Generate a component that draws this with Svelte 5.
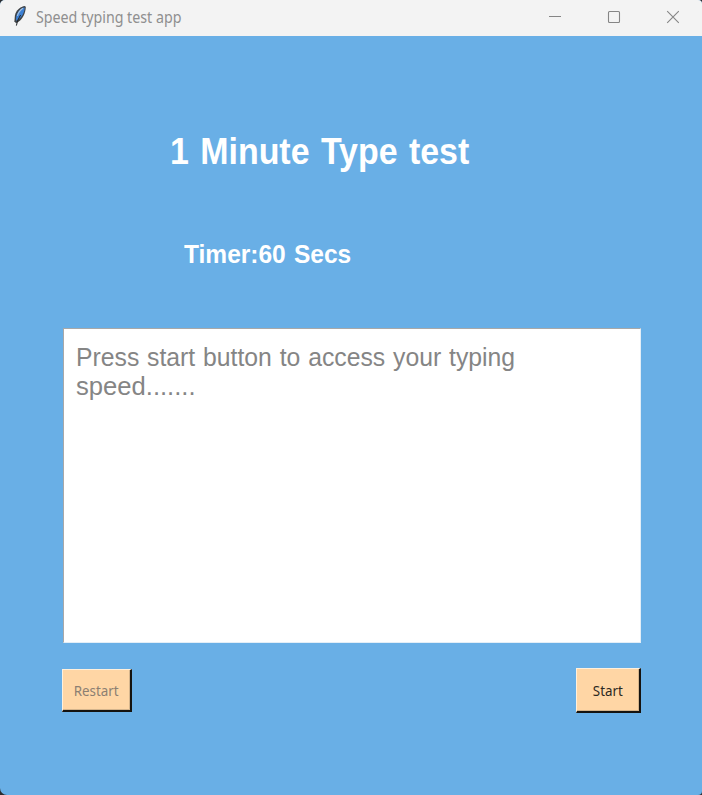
<script>
  const seconds = 60;
</script>

<div class="backdrop">
  <main class="window">
    <header>
      <svg class="feather" width="16" height="22" viewBox="0 0 16 22">
        <path d="M13 1C8.4 1.5 4 5 2.9 10.5L2.4 16.2l1.6 2 2.6-1.4C11 13.4 13.4 8.6 13.8 2Z" fill="#3f4347" />
        <path d="M12.3 2.2C8 4 4.9 7.6 4.2 11.6L4 15.7C8.8 13.8 11.8 9.4 12.7 3.6Z" fill="#3c80d4" />
        <path d="M11 3.2C8.2 5 6.2 7.6 5.4 10.8" stroke="#a3c1e2" stroke-width="1.2" fill="none" />
        <path d="M8.6 10C7 12.8 5.4 15.4 4.4 20.6" stroke="#202326" stroke-width="1" fill="none" />
      </svg>
      <span class="caption">Speed typing test app</span>
      <div class="controls">
        <svg width="14" height="14" viewBox="0 0 14 14"><path d="M1 6.5h12" /></svg>
        <svg width="14" height="14" viewBox="0 0 14 14"><rect x="1.5" y="1.5" width="11" height="11" rx="1" /></svg>
        <svg width="14" height="14" viewBox="0 0 14 14"><path d="M1.2 1.2l11.6 11.6M12.8 1.2L1.2 12.8" /></svg>
      </div>
    </header>
    <h1>1 Minute Type test</h1>
    <p class="timer">Timer:{seconds} Secs</p>
    <div class="entry">
      <span class="line">Press start button to access your typing</span>
      <span class="line dotted">speed.......</span>
    </div>
    <footer>
      <button class="restart" disabled><span>Restart</span></button>
      <button class="start"><span>Start</span></button>
    </footer>
  </main>
</div>

<style>
  :global(body) { margin: 0; }
  .backdrop { width: 702px; height: 795px; background: #2b2d30; }
  .window {
    display: flex; flex-direction: column; width: 702px; height: 795px; box-sizing: border-box;
    background: #69afe6; border-radius: 5px 4px 4px 7px; overflow: hidden;
    font-family: "Liberation Sans", Arial, sans-serif;
  }
  header { display: flex; align-items: center; height: 36px; background: #f3f3f3; flex: none; }
  .feather { margin: -4px 0 0 12px; }
  .caption { margin: -3px 0 0 8px; font: 15.5px/20px "Noto Sans", "Open Sans", sans-serif; color: #8f8f8f; white-space: nowrap; transform: scaleX(0.918); transform-origin: left; }
  .controls { display: flex; gap: 45px; margin: -3px 22px 0 auto; }
  .controls svg { fill: none; stroke: #858585; stroke-width: 1.1; }
  h1, .timer, .line { white-space: nowrap; width: max-content; transform-origin: left; }
  h1 { margin: 95px 0 0 170px; font-size: 36px; line-height: 42px; font-weight: 700; color: #fff; word-spacing: 2.1px; transform: scaleX(0.942); }
  .timer { margin: 66px 0 0 184px; font-size: 26px; line-height: 30px; font-weight: 700; color: #fff; word-spacing: 1.4px; transform: scaleX(0.943); }
  .entry {
    margin: 59px 0 0 63px; width: 578px; height: 315px; box-sizing: border-box; flex: none;
    background: #fff; border: 1px solid #e3eef7; border-top-color: #a8a8a8; border-left-color: #a8a8a8;
    padding: 14px 0 0 12px; font-size: 26px; line-height: 29px; color: #858585;
  }
  .line { display: block; word-spacing: 1px; transform: scaleX(0.952); }
  .dotted { transform: scaleX(0.985); }
  footer { display: flex; justify-content: space-between; align-items: center; margin: 25px 61px 0 62px; }
  button {
    box-sizing: border-box; padding: 0; background: #ffd6a5; border: solid; border-width: 1px 2px 2px 1px; border-color: #fff0dc #151310 #151310 #fff0dc;
    box-shadow: inset -1px -1px #d4b48c; border-radius: 0; font: 15px/20px "Noto Sans", "Open Sans", sans-serif; color: #2c2822;
  }
  button span { display: inline-block; transform: scaleX(0.89); }
  .restart { width: 70px; height: 43px; color: #8c7f72; }
  .start { width: 65px; height: 45px; }
</style>
